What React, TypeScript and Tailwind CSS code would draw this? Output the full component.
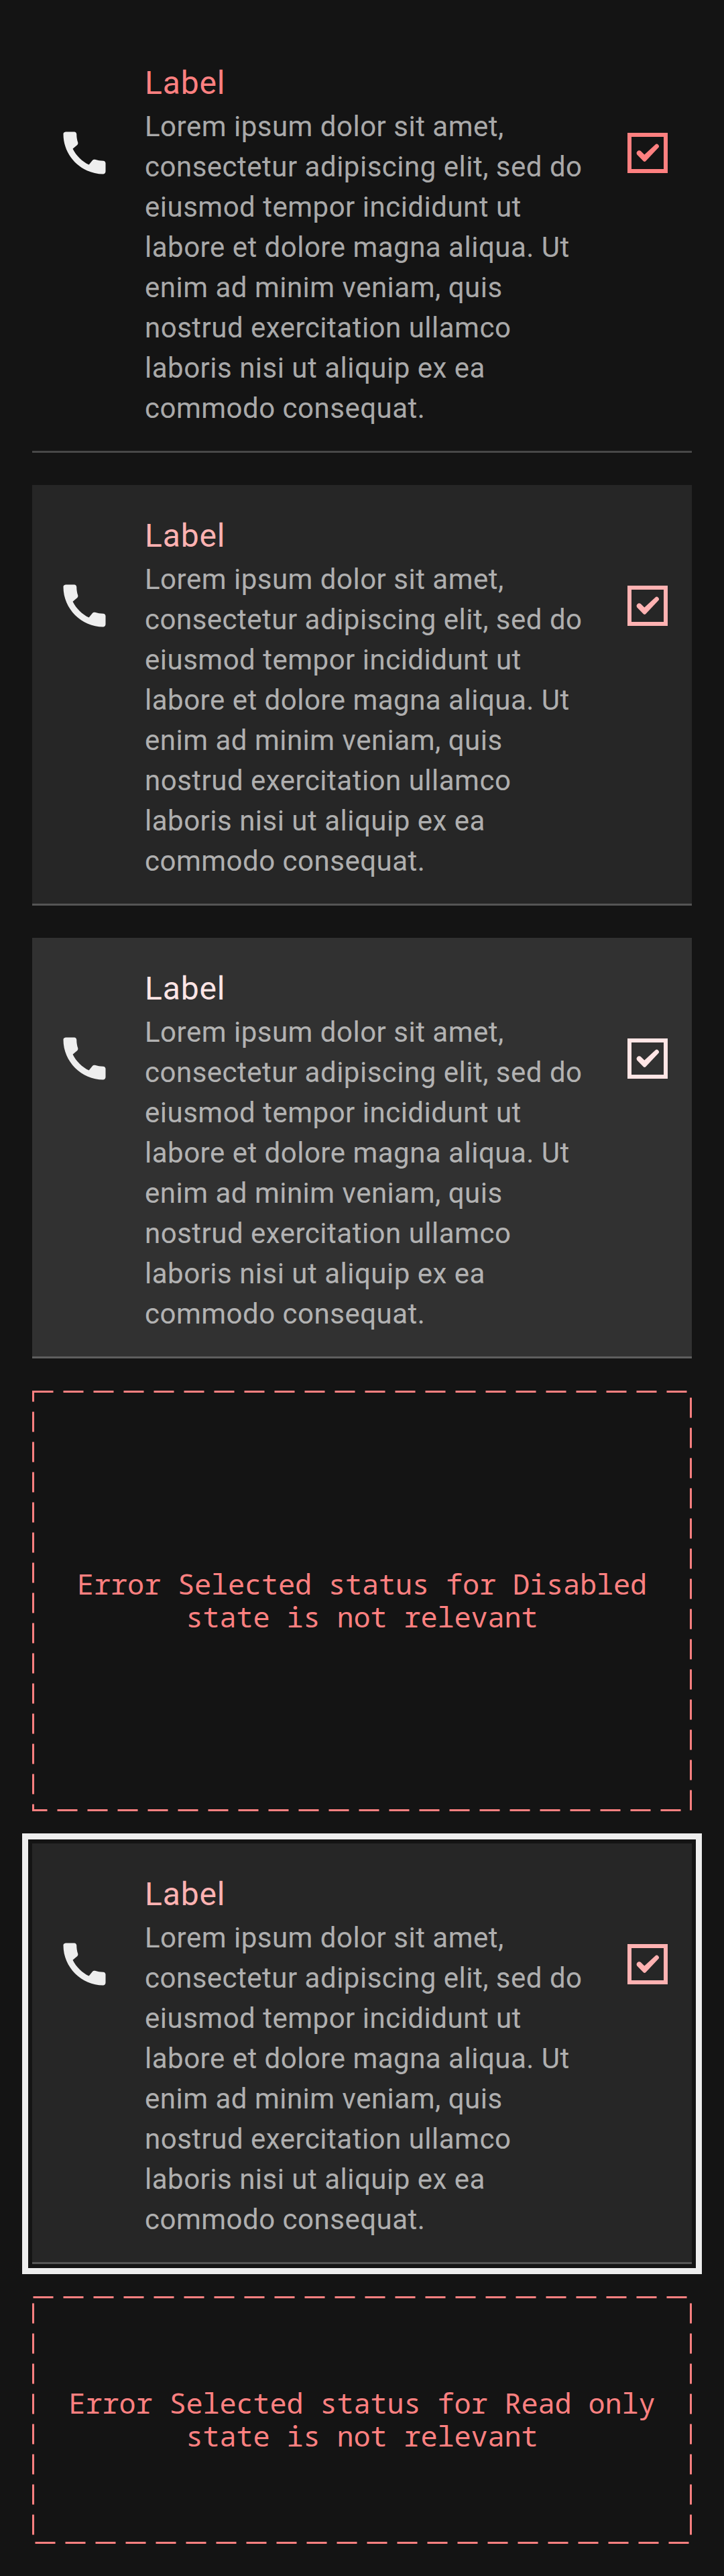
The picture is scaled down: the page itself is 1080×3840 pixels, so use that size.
import { MdCall } from "react-icons/md";

const DESCRIPTION =
  "Lorem ipsum dolor sit amet, consectetur adipiscing elit, sed do eiusmod tempor incididunt ut labore et dolore magna aliqua. Ut enim ad minim veniam, quis nostrud exercitation ullamco laboris nisi ut aliquip ex ea commodo consequat.";

function Checkbox() {
  return (
    <svg viewBox="0 0 60 60" className="size-[60px] shrink-0" fill="currentColor">
      <path d="M0 0H60V60H0ZM6 6V54H54V6Z" fillRule="evenodd" />
      <path d="M19.7 27L25.3 32.4L41.3 17.8A3.2 3.2 0 0 1 46 22.3L27.4 42A2.7 2.7 0 0 1 23.6 42L14.3 32.4A3.9 3.9 0 0 1 19.7 27Z" />
    </svg>
  );
}

function CheckboxItem({ surface, accent, focused = false }: { surface: string; accent: string; focused?: boolean }) {
  return (
    <div
      className={`flex h-[627px] shrink-0 items-start justify-between border-b-[3px] border-[#eeeeee]/24 px-9 ${surface} ${accent} ${
        focused ? "outline-9 outline-offset-6 outline-[#eeeeee]" : ""
      }`}
    >
      <div className="flex gap-12">
        <MdCall className="mt-[138px] size-[84px] shrink-0 text-[#eeeeee]" />
        <div className="w-[672px] pt-10 font-['Roboto',sans-serif]">
          <div className="text-[48px] leading-[72px] tracking-[0.85px]">Label</div>
          <p className="-mt-px text-[42px] leading-[60px] tracking-[0.5px] text-[#eeeeee]/70">{DESCRIPTION}</p>
        </div>
      </div>
      <div className="pt-[150px]">
        <Checkbox />
      </div>
    </div>
  );
}

function NotRelevant({ height, lines }: { height: number; lines: string[] }) {
  return (
    <div className="relative flex shrink-0 items-center justify-center pb-[3px]" style={{ height }}>
      <svg className="absolute inset-0" width={984} height={height} fill="none">
        <rect x={1.5} y={1.5} width={981} height={height - 3} stroke="#ff8080" strokeWidth={3} strokeDasharray="30 15" />
      </svg>
      <p className="text-center font-['Noto_Sans_Mono','DejaVu_Sans_Mono',monospace] text-[42px] leading-[49px] tracking-[-0.2px] whitespace-nowrap text-[#ff8080]">
        {lines.map((line) => (
          <span key={line} className="block">
            {line}
          </span>
        ))}
      </p>
    </div>
  );
}

export default function App() {
  return (
    <main className="flex h-[3840px] w-[1080px] flex-col gap-12 bg-[#141414] p-12">
      <CheckboxItem surface="bg-[#141414]" accent="text-[#ff8080]" />
      <CheckboxItem surface="bg-[#262626]" accent="text-[#ffb2b2]" />
      <CheckboxItem surface="bg-[#313131]" accent="text-[#ffe5e5]" />
      <NotRelevant height={627} lines={["Error Selected status for Disabled", "state is not relevant"]} />
      <CheckboxItem surface="bg-[#262626]" accent="text-[#ffb2b2]" focused />
      <NotRelevant height={369} lines={["Error Selected status for Read only", "state is not relevant"]} />
    </main>
  );
}
